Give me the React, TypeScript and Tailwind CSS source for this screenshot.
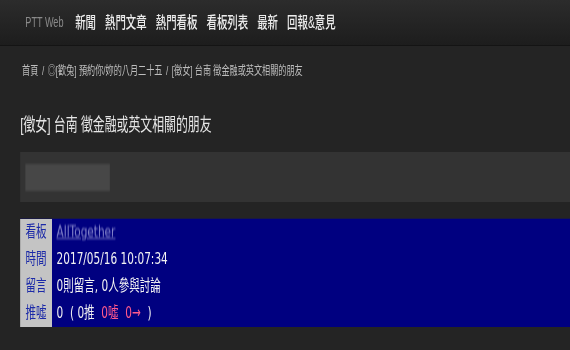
const navItems = ["新聞", "熱門文章", "熱門看板", "看板列表", "最新", "回報&意見"];

const rows = [
  { label: "看板", kind: "board" },
  { label: "時間", kind: "time" },
  { label: "留言", kind: "comments" },
  { label: "推噓", kind: "votes" },
];

const Value = ({ kind }: { kind: string }) => {
  if (kind === "board") {
    return (
      <span className="text-[#a9a9e0] underline blur-[1.2px] opacity-80">AllTogether</span>
    );
  }
  if (kind === "time") return <span>2017/05/16 10:07:34</span>;
  if (kind === "comments") return <span>0則留言, 0人參與討論</span>;
  return (
    <span className="whitespace-pre">
      0  ( 0推  <span className="text-[#ff5a8c]">0噓  0→</span>  )
    </span>
  );
};

export default function App() {
  return (
    <div className="w-[570px] h-[350px] overflow-hidden bg-[#242424]">
      <div className="w-[877px] origin-top-left scale-x-[0.65] font-['Liberation_Sans','Noto_Sans_CJK_TC',sans-serif]">
        {/* top bar */}
        <nav className="h-[46px] flex items-center pl-[39px] bg-gradient-to-b from-[#2c2c2c] to-[#1d1d1d] border-b border-[#141414]">
          <span className="text-[14px] text-[#8a8a8a] mr-[18px]">PTT Web</span>
          <div className="flex gap-[14px]">
            {navItems.map((item) => (
              <span key={item} className="text-[16px] font-medium text-[#ececec]">
                {item}
              </span>
            ))}
          </div>
        </nav>

        <div className="pl-[31px]">
          {/* breadcrumb */}
          <div className="mt-[17px] pl-[3px] text-[12.5px] leading-[16px] text-[#bdbdbd] whitespace-nowrap">
            首頁 <span className="mx-[2px]">/</span> ◎[歡兔] 預約你/妳的八月二十五{" "}
            <span className="mx-[2px]">/</span> [徵女] 台南 徵金融或英文相關的朋友
          </div>

          {/* title */}
          <h1 className="mt-[34px] text-[18.3px] leading-[24px] text-[#e6e6e6] whitespace-nowrap">
            [徵女] 台南 徵金融或英文相關的朋友
          </h1>

          {/* author box */}
          <div className="mt-[15px] h-[50px] bg-[#333333] flex items-center pl-[8px]">
            <div className="w-[130px] h-[27px] bg-[#474747] blur-[1px]" />
          </div>

          {/* meta table */}
          <div className="mt-[16px] border-t border-[#1a1a40] font-['DejaVu_Sans','Noto_Sans_CJK_TC',sans-serif] text-[16.2px]">
            {rows.map((row) => (
              <div key={row.label} className="flex h-[27px]">
                <div className="w-[49px] shrink-0 bg-[#c4c4c4] text-[#1c2aa8] flex items-center justify-center">
                  {row.label}
                </div>
                <div className="flex-1 bg-[#000080] text-[#f2f2f2] flex items-center pl-[7px]">
                  <Value kind={row.kind} />
                </div>
              </div>
            ))}
          </div>
        </div>
      </div>
    </div>
  );
}
